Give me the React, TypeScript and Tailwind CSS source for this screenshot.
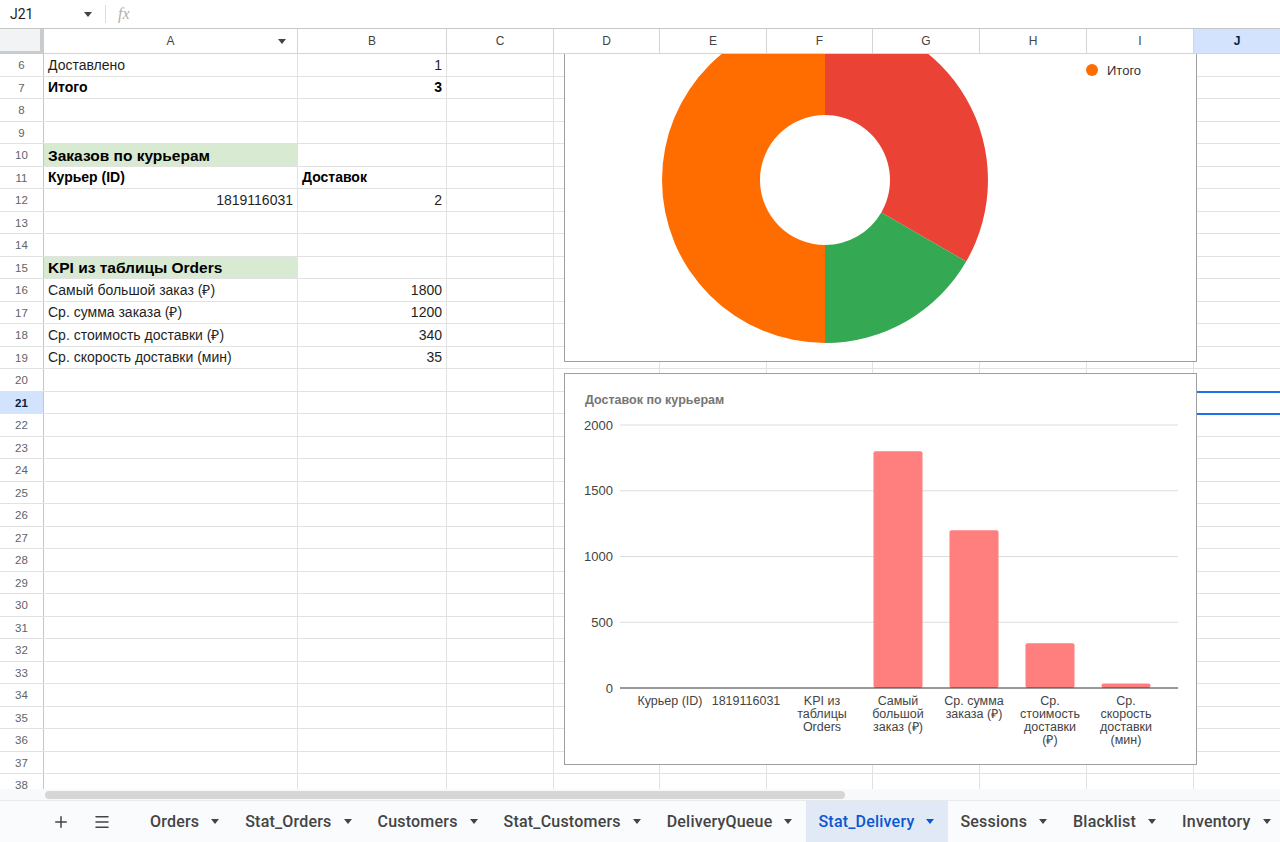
import React from 'react';
import { Plus, Menu } from 'lucide-react';

type Cell = { text: string; bold?: boolean; right?: boolean; big?: boolean; green?: boolean };

const cellData: Record<number, { a?: Cell; b?: Cell }> = {
  6: { a: { text: 'Доставлено' }, b: { text: '1', right: true } },
  7: { a: { text: 'Итого', bold: true }, b: { text: '3', right: true, bold: true } },
  10: { a: { text: 'Заказов по курьерам', bold: true, big: true, green: true } },
  11: { a: { text: 'Курьер (ID)', bold: true }, b: { text: 'Доставок', bold: true } },
  12: { a: { text: '1819116031', right: true }, b: { text: '2', right: true } },
  15: { a: { text: 'KPI из таблицы Orders', bold: true, big: true, green: true } },
  16: { a: { text: 'Самый большой заказ (₽)' }, b: { text: '1800', right: true } },
  17: { a: { text: 'Ср. сумма заказа (₽)' }, b: { text: '1200', right: true } },
  18: { a: { text: 'Ср. стоимость доставки (₽)' }, b: { text: '340', right: true } },
  19: { a: { text: 'Ср. скорость доставки (мин)' }, b: { text: '35', right: true } },
};

const rows = Array.from({ length: 33 }, (_, i) => i + 6);

// columns C..I after A and B
const restCols = [
  { key: 'C', w: 'w-[107px]' },
  { key: 'D', w: 'w-[106px]' },
  { key: 'E', w: 'w-[107px]' },
  { key: 'F', w: 'w-[106px]' },
  { key: 'G', w: 'w-[107px]' },
  { key: 'H', w: 'w-[107px]' },
  { key: 'I', w: 'w-[107px]' },
];

const tabs = ['Orders', 'Stat_Orders', 'Customers', 'Stat_Customers', 'DeliveryQueue', 'Stat_Delivery', 'Sessions', 'Blacklist', 'Inventory'];

const bars = [
  { label: ['Курьер (ID)'], value: 0 },
  { label: ['1819116031'], value: 0 },
  { label: ['KPI из', 'таблицы', 'Orders'], value: 0 },
  { label: ['Самый', 'большой', 'заказ (₽)'], value: 1800 },
  { label: ['Ср. сумма', 'заказа (₽)'], value: 1200 },
  { label: ['Ср.', 'стоимость', 'доставки', '(₽)'], value: 340 },
  { label: ['Ср.', 'скорость', 'доставки', '(мин)'], value: 35 },
];

const polar = (cx: number, cy: number, r: number, deg: number) => {
  const a = ((deg - 90) * Math.PI) / 180;
  return [cx + r * Math.cos(a), cy + r * Math.sin(a)];
};

const donutSlice = (cx: number, cy: number, R: number, r: number, start: number, end: number) => {
  const [x1, y1] = polar(cx, cy, R, start);
  const [x2, y2] = polar(cx, cy, R, end);
  const [x3, y3] = polar(cx, cy, r, end);
  const [x4, y4] = polar(cx, cy, r, start);
  const large = end - start > 180 ? 1 : 0;
  return `M${x1} ${y1} A${R} ${R} 0 ${large} 1 ${x2} ${y2} L${x3} ${y3} A${r} ${r} 0 ${large} 0 ${x4} ${y4}Z`;
};

const Caret = ({ color = '#444' }: { color?: string }) => (
  <svg width="8" height="5" viewBox="0 0 8 5" className="shrink-0">
    <path d="M0 0h8L4 5z" fill={color} />
  </svg>
);

const DataCell = ({ cell, w }: { cell?: Cell; w: string }) => (
  <div
    className={`${w} shrink-0 h-full border-r border-[#e2e2e2] flex items-center pt-[1px] px-[4px] whitespace-nowrap overflow-visible ${
      cell?.green ? 'bg-[#d9ead3]' : ''
    } ${cell?.right ? 'justify-end' : ''}`}
  >
    {cell && (
      <span className={`${cell.bold ? 'font-bold text-black' : 'text-[#1f1f1f]'} ${cell.big ? 'text-[15.5px]' : 'text-[14px]'}`}>
        {cell.text}
      </span>
    )}
  </div>
);

const PieChart = () => {
  const cx = 260;
  const cy = 166;
  const slices = [
    { value: 2, color: '#ea4335' },
    { value: 1, color: '#34a853' },
    { value: 3, color: '#ff6d01' },
  ];
  const total = slices.reduce((s, x) => s + x.value, 0);
  let acc = 0;
  return (
    <div className="absolute left-[564px] top-[-41px] w-[633px] h-[349px] border border-[#9e9e9e] bg-white z-10">
      <svg width="631" height="347" className="block">
        {slices.map((s) => {
          const start = (acc / total) * 360;
          acc += s.value;
          const end = (acc / total) * 360;
          return <path key={s.color} d={donutSlice(cx, cy, 163, 65, start, end)} fill={s.color} />;
        })}
        <circle cx="527" cy="56" r="6" fill="#ff6d01" />
        <text x="542" y="60.5" fontSize="13" fill="#333" fontFamily="'Liberation Sans', Arial, sans-serif">
          Итого
        </text>
      </svg>
    </div>
  );
};

const BarChart = () => {
  const base = 314;
  const k = 0.1315;
  const ticks = [0, 500, 1000, 1500, 2000];
  return (
    <div className="absolute left-[564px] top-[319px] w-[633px] h-[392px] border border-[#9e9e9e] bg-white z-10">
      <svg width="631" height="390" className="block" fontFamily="'Liberation Sans', Arial, sans-serif">
        <text x="20" y="30" fontSize="12.5" fontWeight="bold" fill="#757575">
          Доставок по курьерам
        </text>
        {ticks.map((t) => (
          <g key={t}>
            <text x="48" y={base - t * k + 4.5} fontSize="13" fill="#444" textAnchor="end">
              {t}
            </text>
            {t > 0 && <line x1="55" x2="613" y1={base - t * k} y2={base - t * k} stroke="#dcdcdc" strokeWidth="1" />}
          </g>
        ))}
        {bars.map((b, i) => {
          const c = 105 + i * 76;
          const h = b.value * k;
          return (
            <g key={i}>
              {b.value > 0 && <rect x={c - 24.5} y={base - h} width="49" height={h} rx="2" fill="#ff7f7f" />}
              {b.label.map((l, j) => (
                <text key={j} x={c} y={330.5 + j * 13} fontSize="12.5" fill="#444" textAnchor="middle">
                  {l}
                </text>
              ))}
            </g>
          );
        })}
        <line x1="55" x2="613" y1={base} y2={base} stroke="#333" strokeWidth="1" />
      </svg>
    </div>
  );
};

export default function App() {
  return (
    <div className="w-[1280px] h-[842px] flex flex-col bg-white overflow-hidden font-['Liberation_Sans',Arial,sans-serif]">
      {/* formula bar */}
      <div className="h-[29px] shrink-0 flex items-center border-b border-[#c4c7c5] font-['Roboto',sans-serif]">
        <span className="ml-[10px] text-[14px] text-[#1f1f1f] w-[74px]">J21</span>
        <Caret />
        <div className="ml-[13px] w-px h-[18px] bg-[#dadce0]" />
        <span className="ml-[12px] text-[16px] italic text-[#b0b0b0] font-['Liberation_Serif',serif]">fx</span>
      </div>

      {/* column headers */}
      <div className="h-[25px] shrink-0 flex text-[12px] text-[#444]">
        <div className="w-[44px] shrink-0 h-full bg-[#f1f3f4] border-r-4 border-b-[3px] border-[#c9cccf]" />
        <div className="w-[254px] shrink-0 h-full border-r border-b border-[#d5d5d5] flex items-center justify-center relative">
          A
          <span className="absolute right-[11px] top-[10px]">
            <Caret />
          </span>
        </div>
        <div className="w-[149px] shrink-0 h-full border-r border-b border-[#d5d5d5] flex items-center justify-center">B</div>
        {restCols.map((c) => (
          <div key={c.key} className={`${c.w} shrink-0 h-full border-r border-b border-[#d5d5d5] flex items-center justify-center`}>
            {c.key}
          </div>
        ))}
        <div className="flex-1 h-full border-b border-[#d5d5d5] bg-[#d3e3fd] flex items-center justify-center font-bold text-[#041e49]">
          J
        </div>
      </div>

      {/* grid body */}
      <div className="flex-1 relative overflow-hidden">
        {rows.map((r) => {
          const d = cellData[r] || {};
          const sel = r === 21;
          return (
            <div key={r} className="h-[22.5px] flex border-b border-[#e2e2e2]">
              <div
                className={`w-[44px] shrink-0 h-full border-r border-[#c4c7c5] flex items-center justify-center pt-[2px] text-[11.5px] ${
                  sel ? 'bg-[#d3e3fd] font-bold text-[#041e49]' : 'text-[#5f6368]'
                }`}
              >
                {r}
              </div>
              <DataCell cell={d.a} w="w-[254px]" />
              <DataCell cell={d.b} w="w-[149px]" />
              {restCols.map((c) => (
                <div key={c.key} className={`${c.w} shrink-0 h-full border-r border-[#e2e2e2]`} />
              ))}
              <div className="flex-1" />
            </div>
          );
        })}
        <div className="absolute left-[1193px] top-[337px] w-[100px] h-[24px] border-2 border-[#1a73e8]" />
        <PieChart />
        <BarChart />
      </div>

      {/* horizontal scrollbar */}
      <div className="h-[11px] shrink-0 bg-[#f8f9fa] flex items-center pl-[45px]">
        <div className="w-[800px] h-[8px] rounded-full bg-[#d6d6d6]" />
      </div>

      {/* sheet tabs */}
      <div className="h-[42px] shrink-0 bg-[#f9fbfd] border-t border-[#e8eaed] flex items-stretch font-['Roboto',sans-serif] font-medium text-[16px] tracking-[0.2px] text-[#444]">
        <div className="flex items-center shrink-0 pl-[52px] w-[138px] gap-[23px]">
          <Plus size={18} strokeWidth={2} color="#444" />
          <Menu size={18} strokeWidth={2} color="#444" />
        </div>
        {tabs.map((t) => {
          const active = t === 'Stat_Delivery';
          return (
            <div
              key={t}
              className={`flex items-center shrink-0 pl-[12px] pr-[14px] gap-[12px] whitespace-nowrap ${
                active ? 'bg-[#e1e9f7] text-[#0b57d0]' : ''
              }`}
            >
              <span>{t}</span>
              <Caret color={active ? '#0b57d0' : '#444'} />
            </div>
          );
        })}
      </div>
    </div>
  );
}
